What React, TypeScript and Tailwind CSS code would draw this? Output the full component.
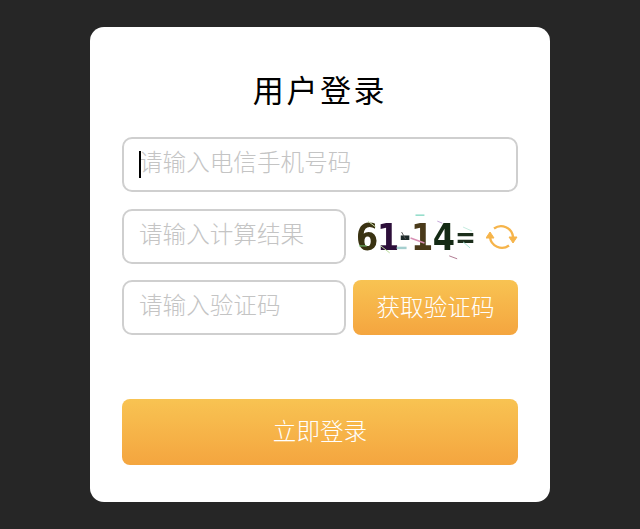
const inputCls =
  "h-[55px] rounded-[10px] border-2 border-[#cfcfcf] bg-white pl-[15px] pr-2 pb-[8px] text-[23.6px] font-light outline-none placeholder:text-[#c4c4c4]";

const captcha = [
  { c: "6", w: "w-[22px]", cls: "text-[#3a3312] text-[32px]" },
  { c: "1", w: "w-[20px]", cls: "text-[#2d0f3a] text-[32px]" },
  { c: "-", w: "w-[14px]", cls: "text-[#1d2a2a] text-[28px]" },
  { c: "1", w: "w-[20px]", cls: "text-[#4a3a1a] text-[32px]" },
  { c: "4", w: "w-[24px]", cls: "text-[#142a14] text-[32px]" },
  { c: "=", w: "w-[19px]", cls: "text-[#1c2e1c] text-[25px]" },
];

export default function App() {
  return (
    <div className="min-h-[529px] bg-[#262626] pt-[27px] font-[family-name:'Noto_Sans_CJK_SC','Noto_Sans',sans-serif]">
      <div className="mx-auto flex h-[475px] w-[460px] flex-col rounded-[14px] bg-white px-8">
        <h1 className="mt-[41px] text-center text-[31px] leading-[42px] font-normal tracking-[2.6px] text-black">用户登录</h1>
        <div className="relative mt-[27px]">
          <input placeholder="请输入电信手机号码" className={inputCls + " w-full"} />
          <span className="absolute left-[17px] top-[14px] h-[27px] w-[2px] bg-black" />
        </div>
        <div className="mt-[17px] flex items-center">
          <input placeholder="请输入计算结果" className={inputCls + " w-[224px]"} />
          <div className="relative ml-[7px] h-[50px] w-[125px] overflow-hidden">
            <div className="flex h-full scale-y-[1.15] items-center pl-[3px] font-[family-name:'DejaVu_Sans',sans-serif] leading-none font-bold blur-[0.4px]">
              {captcha.map((g, i) => (
                <span key={i} className={g.w + " flex justify-center " + g.cls}>
                  {g.c}
                </span>
              ))}
            </div>
            <svg viewBox="0 0 125 50" className="absolute inset-0 h-full w-full" fill="none">
              <path d="M15 9l8 6" stroke="#cfe3b0" strokeWidth="1" />
              <path d="M28 34l9 7" stroke="#b9dc9c" strokeWidth="1" />
              <path d="M63 3h9" stroke="#8fdcc8" strokeWidth="1.5" />
              <path d="M58 26l14 5" stroke="#d88fb4" strokeWidth="1.5" />
              <path d="M44 36h10" stroke="#a5cfcf" strokeWidth="2.5" />
              <path d="M85 9l5 2" stroke="#c5a6d8" strokeWidth="1" />
              <path d="M111 30l7 6" stroke="#a7e3d3" strokeWidth="1" />
              <path d="M111 15l9 4" stroke="#c3ebdf" strokeWidth="1" />
              <path d="M97 44l8 3" stroke="#b07a92" strokeWidth="1" />
              <path d="M49 20l4 7" stroke="#555555" strokeWidth="1" />
              <path d="M6 34h8" stroke="#78c878" strokeWidth="1" />
            </svg>
          </div>
          <svg viewBox="0 0 32 26" className="ml-[9px] h-[26px] w-[32px] shrink-0" fill="none" stroke="#f6b44a" strokeWidth="2.4">
            <path d="M8 4.5A12 12 0 0 1 27 13" />
            <path d="M23 21.5A12 12 0 0 1 4 13" />
            <path d="M23 13H31L27 19Z" fill="#f6b44a" strokeWidth="1" />
            <path d="M0 14H8L4 8Z" fill="#f6b44a" strokeWidth="1" />
          </svg>
        </div>
        <div className="mt-[16px] flex items-center justify-between">
          <input placeholder="请输入验证码" className={inputCls + " w-[224px]"} />
          <button className="h-[55px] w-[165px] rounded-[8px] bg-gradient-to-b from-[#f8c352] to-[#f4a53f] pb-[2px] text-[23.6px] font-light text-white">
            获取验证码
          </button>
        </div>
        <button className="mt-[64px] h-[66px] w-full rounded-[8px] bg-gradient-to-b from-[#f8c352] to-[#f4a53f] pb-[2px] text-[23.6px] font-light text-white">
          立即登录
        </button>
      </div>
    </div>
  );
}
